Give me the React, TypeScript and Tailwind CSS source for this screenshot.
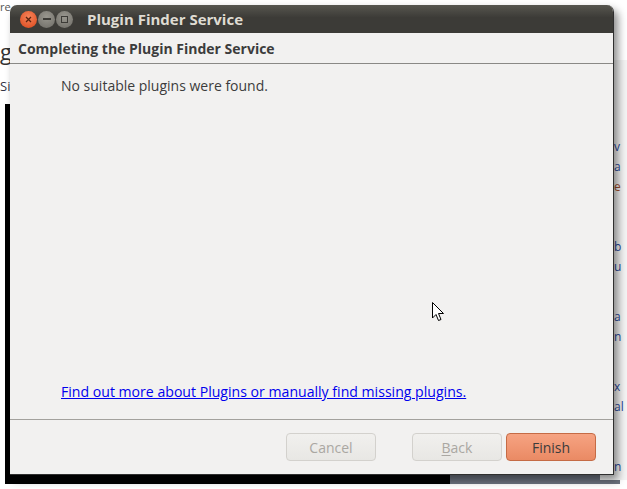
import React from 'react';

const FONT = { fontFamily: '"Open Sans", "DejaVu Sans", sans-serif' };

function TitleButton({ kind }: { kind: 'close' | 'min' | 'max' }) {
  const bg =
    kind === 'close'
      ? 'bg-[radial-gradient(circle_at_50%_35%,#f7845a,#d9461a)]'
      : 'bg-[radial-gradient(circle_at_50%_35%,#99978f,#6e6c66)]';
  return (
    <div className={`flex h-[17px] w-[17px] items-center justify-center rounded-full ${bg}`}>
      {kind === 'close' && (
        <svg width="7" height="7" viewBox="0 0 7 7">
          <path d="M1 1L6 6M6 1L1 6" stroke="#5a2410" strokeWidth="1.3" />
        </svg>
      )}
      {kind === 'min' && <div className="h-[2px] w-[8px] bg-[#3c3b37]" />}
      {kind === 'max' && <div className="h-[7px] w-[7px] border border-[#3c3b37]" />}
    </div>
  );
}

function Btn({ label, u, primary, disabled }: { label: string; u?: number; primary?: boolean; disabled?: boolean }) {
  const cls = primary
    ? 'border-[#c56b45] bg-[linear-gradient(#f6a382,#ea8a64)] text-[#3c3c3c]'
    : 'border-[#d3d1cd] bg-[linear-gradient(#f1f0ee,#e8e7e4)] text-[#aaa7a2]';
  return (
    <div
      className={`flex h-[28px] w-[90px] items-center justify-center rounded-[4px] border text-[14px] ${cls}`}
      aria-disabled={disabled}
    >
      {u !== undefined ? (
        <span>
          {label.slice(0, u)}
          <span className="underline underline-offset-2">{label[u]}</span>
          {label.slice(u + 1)}
        </span>
      ) : (
        label
      )}
    </div>
  );
}

export default function App() {
  return (
    <div className="relative h-[489px] w-[627px] overflow-hidden bg-white" style={FONT}>
      {/* desktop behind the dialog */}
      <div className="absolute left-0 top-[1px] text-[11px] leading-none text-[#555]">re</div>
      <div className="absolute left-0 top-[40px] text-[22px] leading-none text-[#333]">g</div>
      <div className="absolute left-0 top-[80px] text-[13px] leading-none text-[#334]">Si</div>
      <div className="absolute left-[5px] top-[104px] h-[380px] w-[450px] bg-black" />
      <div className="absolute left-[450px] top-[474px] h-[10px] w-[170px] bg-[#6d7480]" />
      <div className="absolute left-[600px] top-[60px] flex h-[420px] w-[27px] flex-col gap-[6px] bg-[#f4f4f4] pl-[14px] pt-[80px] text-[12px] leading-[14px] text-[#2a4a9a]">
        <span>v</span>
        <span>a</span>
        <span className="text-[#a05030]">e</span>
        <span className="pt-[40px]">b</span>
        <span>u</span>
        <span className="pt-[30px]">a</span>
        <span>n</span>
        <span className="pt-[30px]">x</span>
        <span>al</span>
        <span className="pt-[40px]">n</span>
      </div>

      {/* dialog window */}
      <div className="absolute left-[10px] top-[5px] flex h-[470px] w-[604px] flex-col overflow-hidden rounded-t-[7px] border-r border-b border-[#2f2f2f] bg-[#f2f1f0] shadow-[4px_5px_8px_rgba(0,0,0,0.45)]">
        <div className="flex h-[28px] shrink-0 items-center gap-[1px] bg-[linear-gradient(#57564f,#3c3b37_45%)] pl-[10px]">
          <TitleButton kind="close" />
          <TitleButton kind="min" />
          <TitleButton kind="max" />
          <span className="ml-[13px] text-[15px] font-bold text-[#dfdbd2]">Plugin Finder Service</span>
        </div>

        <div className="flex h-[31px] shrink-0 items-center border-b border-[#8a8986] pl-[8px] text-[14px] font-bold text-[#3c3c3c]">
          Completing the Plugin Finder Service
        </div>

        <div className="flex flex-1 flex-col px-[51px] pt-[12px] text-[14px] text-[#3c3c3c]">
          <p className="leading-[20px]">No suitable plugins were found.</p>
          <div className="flex-1" />
          <a className="mb-[17px] text-[14.1px] leading-[20px] text-[#0000ee] underline" href="#">
            Find out more about Plugins or manually find missing plugins.
          </a>
        </div>

        <div className="flex h-[55px] shrink-0 items-start border-t border-[#a3a19d] pl-[276px] pt-[13px]">
          <Btn label="Cancel" disabled />
          <div className="w-[36px]" />
          <Btn label="Back" u={0} disabled />
          <div className="w-[4px]" />
          <Btn label="Finish" primary />
        </div>
      </div>

      {/* mouse pointer */}
      <svg className="absolute left-[432px] top-[302px]" width="13" height="20" viewBox="0 0 13 20">
        <path d="M0.5 0.5V16L4 12.5L6.5 18.5L9 17.5L6.5 11.5H11.5Z" fill="white" stroke="black" strokeWidth="1" />
      </svg>
    </div>
  );
}
